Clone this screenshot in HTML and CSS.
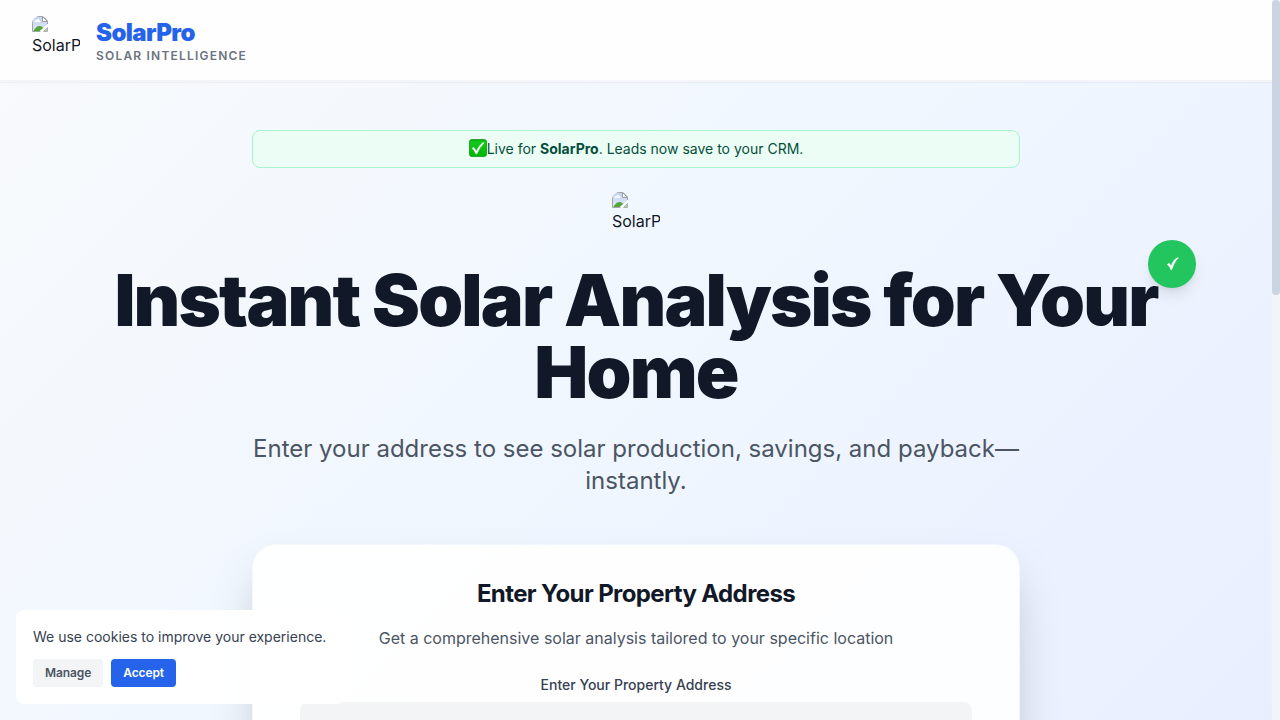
FILE: index.html
```html
<!DOCTYPE html>
<html lang="en">
<head>
<meta charset="utf-8">
<title>SolarPro</title>
<link rel="stylesheet" href="styles.css">
</head>
<body>
<svg class="defs" width="0" height="0">
  <defs>
    <linearGradient id="sky" x1="0" y1="0" x2="0" y2="1"><stop offset="0" stop-color="#c3d3f2"/><stop offset="1" stop-color="#dce7fa"/></linearGradient>
    <linearGradient id="tick" x1="0" y1="0" x2="0" y2="1"><stop offset="0" stop-color="#06a70c"/><stop offset=".15" stop-color="#12c91b"/><stop offset="1" stop-color="#00b507"/></linearGradient>
    <symbol id="missing" viewBox="0 0 16 16">
      <path d="M.5 2.500Q.5.500 2.500.500H11L15.500 5V9L9 15.500H.5Z" fill="url(#sky)"/>
      <path d="M2.500 6C2.500 4.500 4 4 4.500 4 5.500 2.500 7 3 7.300 4.500 8.500 4.500 8.500 6 8 6Z" fill="#fff"/>
      <path d="M1 15.500C3 12 5 10 7.500 10S10 11 11.500 12L8.500 15.500Z" fill="#55a536"/>
      <path d="M.5 15.500V2.500Q.5.500 2.500.500H11L15.500 5V8M.5 15.500H8.500" fill="none" stroke="#a2a5a8"/>
      <path d="M10.500.5V5.500H15.500Z" fill="#fff" stroke="#9b9fa3"/>
      <path d="M8.500 15.500 16 9" stroke="#fff" stroke-width="1.800"/>
      <path d="M11.500 15.500H15.500V11.500Z" fill="#b9d19f" stroke="#a2a5a8" stroke-width=".8"/>
    </symbol>
  </defs>
</svg>
<div class="page">
  <header class="header">
    <div class="logo"><svg class="logo-icon"><use href="#missing"/></svg><span>SolarPro</span></div>
    <div class="brand">
      <div class="brand-name">SolarPro</div>
      <div class="brand-tag">SOLAR INTELLIGENCE</div>
    </div>
  </header>
  <main class="hero">
    <div class="notice">
      <svg class="notice-icon" viewBox="0 0 18 18"><rect x=".4" y=".4" width="17.200" height="17.200" rx="2.800" fill="url(#tick)" stroke="#07950b" stroke-width=".8"/><path d="M3 9.300 4.800 8.300Q6.300 9.800 7.200 12 10 6.500 14 3.300L15 4Q10.500 8.500 8 14.800H6.600Q5.500 11.500 3 9.300Z" fill="#fff" stroke="#fff" stroke-width=".3"/></svg>
      <span>Live for <b>SolarPro</b>. Leads now save to your CRM.</span>
    </div>
    <div class="logo"><svg class="logo-icon"><use href="#missing"/></svg><span>SolarPro</span></div>
    <h1 class="title">Instant Solar Analysis for Your Home</h1>
    <p class="lead">Enter your address to see solar production, savings, and payback—instantly.</p>
    <section class="card">
      <h2 class="card-title">Enter Your Property Address</h2>
      <p class="card-text">Get a comprehensive solar analysis tailored to your specific location</p>
      <label class="card-label">Enter Your Property Address</label>
      <div class="field"></div>
    </section>
  </main>
</div>
<div class="badge"><svg width="14" height="16" viewBox="0 0 14 16"><path d="M1 8.500Q2.500 7 3.300 7.300 4.300 8 5 9.700 7.500 3 11 1.700 12 1.400 13 1.800 9 5 6.500 12.500L5 14.500Q4 10.500 1 8.500Z" fill="#fff"/></svg></div>
<aside class="cookies">
  <p class="cookies-text">We use cookies to improve your experience.</p>
  <div class="cookies-actions"><button class="btn">Manage</button><button class="btn btn-primary">Accept</button></div>
</aside>
<div class="scrollbar"><div class="thumb"></div></div>
</body>
</html>
```
FILE: styles.css
```css
* { box-sizing: border-box; margin: 0; padding: 0; }
body {
  width: 1280px;
  height: 720px;
  overflow: hidden;
  font-family: Inter, "Liberation Sans", sans-serif;
  font-size: 16px;
  line-height: 24px;
  color: #111827;
}
.defs { position: absolute; }
.page {
  width: 1272px;
  height: 720px;
  overflow: hidden;
  background: linear-gradient(135deg, #f8fafc 0%, #eff6ff 50%, #e6ecff 100%) 0 0 / 1272px 1000px no-repeat;
}
.header {
  display: flex;
  align-items: center;
  gap: 16px;
  height: 82px;
  padding: 0 32px;
  background: #fefefe;
  border-bottom: 2px solid #f3f5f8;
  box-shadow: 0 1px 1px rgba(0, 0, 0, .04);
}
.logo { width: 48px; height: 48px; overflow: hidden; border-radius: 8px; white-space: nowrap; }
.logo-icon { display: block; width: 16px; height: 16px; }
.logo span { display: block; margin-top: 1px; }
.brand-name { font-size: 24px; line-height: 32px; font-weight: 900; letter-spacing: -.6px; color: #2563eb; margin-top: 1px; margin-bottom: -1px; }
.brand-tag { font-size: 12px; line-height: 16px; font-weight: 600; letter-spacing: 1.2px; color: #6b7280; }
.hero { display: flex; flex-direction: column; align-items: center; padding: 48px 32px 0; }
.notice {
  display: flex;
  align-items: center;
  justify-content: center;
  width: 768px;
  height: 38px;
  margin-bottom: 24px;
  border: 1px solid #a7f3d0;
  border-radius: 8px;
  background: #ecfdf5;
  color: #064e3b;
  font-size: 14px;
  line-height: 20px;
}
.notice-icon { width: 18px; height: 18px; margin-top: -2px; }
.title {
  width: 1152px;
  margin-top: 24px;
  text-align: center;
  font-size: 72px;
  line-height: 72px;
  font-weight: 900;
  letter-spacing: -1.8px;
}
.lead { width: 768px; margin-top: 25px; text-align: center; font-size: 24px; line-height: 32px; color: #4b5563; }
.card {
  display: flex;
  flex-direction: column;
  align-items: center;
  width: 768px;
  height: 420px;
  flex: none;
  margin-top: 47px;
  padding: 33px 47px;
  border: 1px solid rgba(255, 255, 255, .3);
  border-radius: 24px;
  background: rgba(255, 255, 255, .9);
  background-clip: padding-box;
  box-shadow: 0 25px 50px -12px rgba(0, 0, 0, .25);
}
.card-title { font-size: 24px; line-height: 32px; font-weight: 700; letter-spacing: -.6px; }
.card-text { margin-top: 16px; color: #4b5563; }
.card-label { margin-top: 25px; font-size: 14px; line-height: 20px; font-weight: 500; color: #374151; }
.field { width: 672px; height: 60px; margin-top: 7px; border-radius: 8px; background: #f3f4f6; }
.badge {
  position: absolute;
  left: 1148px;
  top: 240px;
  display: grid;
  place-items: center;
  width: 48px;
  height: 48px;
  border-radius: 50%;
  background: #22c55e;
  box-shadow: 0 10px 15px -3px rgba(0, 0, 0, .1), 0 4px 6px -4px rgba(0, 0, 0, .1);
}
.badge svg { margin-left: 2px; }
.cookies {
  position: absolute;
  left: 16px;
  bottom: 16px;
  width: 328px;
  height: 94px;
  padding: 17px;
  border-radius: 8px;
  background: rgba(255, 255, 255, .95);
}
.cookies-text { font-size: 14px; line-height: 20px; color: #374151; white-space: nowrap; }
.cookies-actions { display: flex; gap: 8px; margin-top: 12px; }
.btn {
  height: 28px;
  padding: 0 12px;
  border: 0;
  border-radius: 4px;
  background: #f3f4f6;
  color: #4b5563;
  font: 600 12px/16px Inter, sans-serif;
  letter-spacing: -.1px;
}
.btn-primary { background: #2563eb; color: #fff; }
.scrollbar { position: absolute; right: 0; top: 0; width: 8px; height: 720px; background: #f1f5f9; }
.thumb { width: 8px; height: 295px; border-radius: 4px; background: #cbd5e1; }
```
